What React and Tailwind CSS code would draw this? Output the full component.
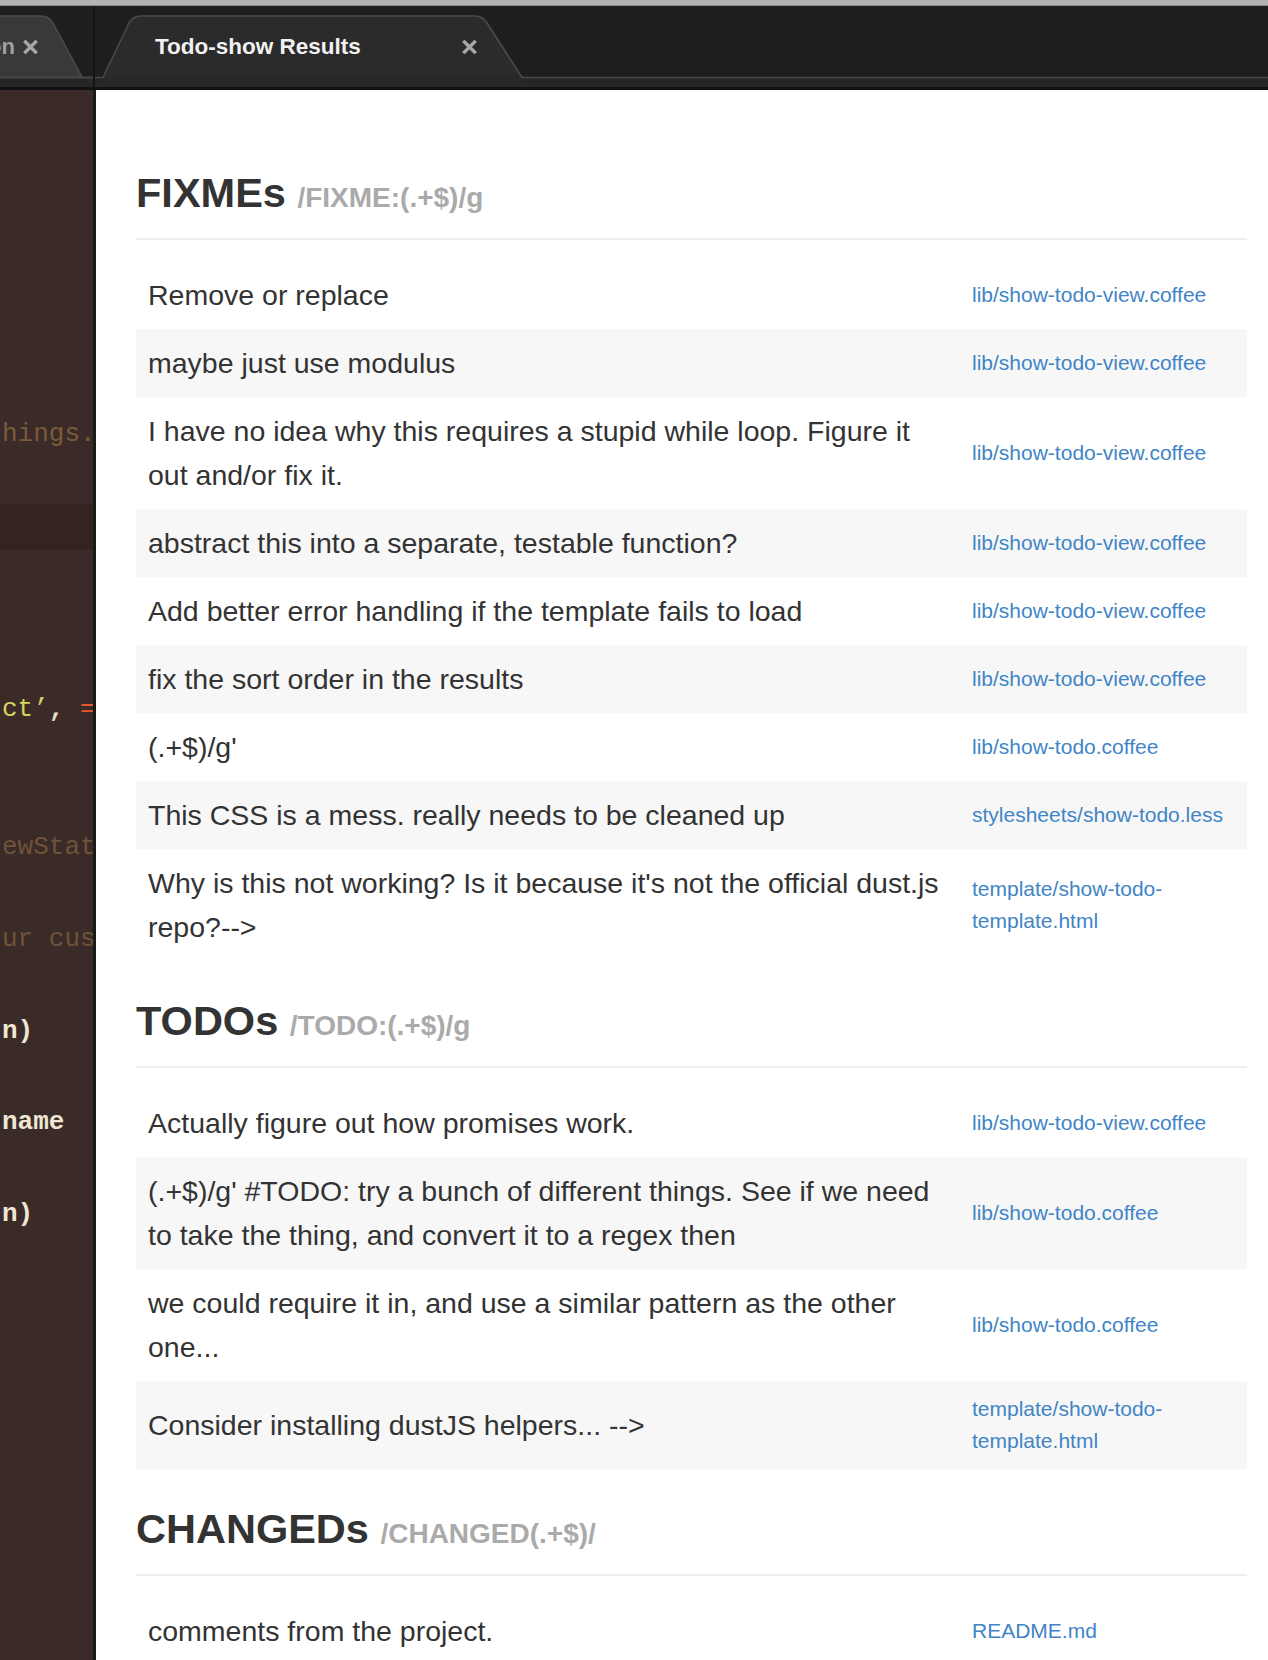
import React from "react";

const fixmes = [
    { text: "Remove or replace", file: "lib/show-todo-view.coffee" },
    { text: "maybe just use modulus", file: "lib/show-todo-view.coffee" },
    { text: "I have no idea why this requires a stupid while loop. Figure it out and/or fix it.", file: "lib/show-todo-view.coffee" },
    { text: "abstract this into a separate, testable function?", file: "lib/show-todo-view.coffee" },
    { text: "Add better error handling if the template fails to load", file: "lib/show-todo-view.coffee" },
    { text: "fix the sort order in the results", file: "lib/show-todo-view.coffee" },
    { text: "(.+$)/g'", file: "lib/show-todo.coffee" },
    { text: "This CSS is a mess. really needs to be cleaned up", file: "stylesheets/show-todo.less" },
    { text: "Why is this not working? Is it because it's not the official dust.js repo?-->", file: "template/show-todo-template.html" },
];

const todos = [
    { text: "Actually figure out how promises work.", file: "lib/show-todo-view.coffee" },
    { text: "(.+$)/g' #TODO: try a bunch of different things. See if we need to take the thing, and convert it to a regex then", file: "lib/show-todo.coffee" },
    { text: "we could require it in, and use a similar pattern as the other one...", file: "lib/show-todo.coffee" },
    { text: "Consider installing dustJS helpers... -->", file: "template/show-todo-template.html" },
];

const changeds = [
    { text: "comments from the project.", file: "README.md" },
];

// visible tail of each editor line (the pane is clipped on the left)
const codeLines = {
    0: [{ t: "hings.", c: "text-[#7a5a3b]" }],
    6: [
        { t: "ct\u2019", c: "text-[#d2d45e]" },
        { t: ", ", c: "text-[#e6dcc4] font-bold" },
        { t: "=", c: "text-[#e8562a]" },
    ],
    9: [{ t: "ewStat", c: "text-[#6e5339]" }],
    11: [{ t: "ur cus", c: "text-[#6e5339]" }],
    13: [{ t: "n)", c: "text-[#efe7d2] font-bold" }],
    15: [{ t: "name", c: "text-[#efe7d2] font-bold" }],
    17: [{ t: "n)", c: "text-[#efe7d2] font-bold" }],
};

const CloseX = () => (
    <svg width="15" height="14" viewBox="0 0 15 14" className="shrink-0">
        <path d="M2.5 2 L12.5 12 M12.5 2 L2.5 12" stroke="#a6a6a6" strokeWidth="3.4" strokeLinecap="square" />
    </svg>
);

const Section = ({ title, regex, items }) => (
    <section className="mt-[37px]">
        <h2 className="pb-[22px] border-b-2 border-[#eeeeee] text-[41.5px] leading-[46px] font-bold text-[#333333]">
            {title} <span className="text-[28px] leading-none font-bold text-[#aaaaaa]">{regex}</span>
        </h2>
        <table className="mt-[21px] w-full table-fixed border-collapse">
            <colgroup>
                <col className="w-[824px]" />
                <col />
            </colgroup>
            <tbody>
                {items.map((item, i) => (
                    <tr key={i} className={i % 2 === 1 ? "bg-[#f7f7f7]" : "bg-white"}>
                        <td className="px-[12px] py-[12px] align-middle text-[28.5px] leading-[44px] text-[#333333]">
                            {item.text}
                        </td>
                        <td className="px-[12px] py-[12px] align-middle text-[21px] leading-[32px] text-[#3f85c6]">
                            <a href="#">{item.file}</a>
                        </td>
                    </tr>
                ))}
            </tbody>
        </table>
    </section>
);

const App = () => {
    return (
        <div className="w-[1268px] h-[1660px] overflow-hidden flex flex-col bg-[#1e1e1e] font-['Liberation_Sans',Arial,sans-serif]">
            <div className="h-[6px] bg-[#b3b3b3] border-b border-[#8a8a8a]" />

            {/* tab bar */}
            <div className="h-[84px] flex">
                <div className="relative w-[95px] overflow-hidden">
                    <svg className="absolute inset-0" width="95" height="84">
                        <rect width="95" height="84" fill="#1e1e1e" />
                        <rect y="71" width="95" height="10" fill="#262626" />
                        <rect y="81" width="95" height="3" fill="#111111" />
                        <path d="M-2 71 L-2 10 L41 10 Q49 10 53 17 L82 71 Z" fill="#393939" />
                        <path d="M-2 10 L41 10 Q49 10 53 17 L82 71" fill="none" stroke="#4b4b4b" strokeWidth="1.5" />
                        <path d="M0 71.5 L95 71.5" stroke="#474747" strokeWidth="2" />
                        <path d="M94 0 L94 84" stroke="#141414" strokeWidth="2" />
                    </svg>
                    <div className="relative h-[71px] pt-[10px] flex items-center gap-[8px]">
                        <span className="ml-[-12px] text-[22px] font-bold text-[#a0a0a0]">on</span>
                        <CloseX />
                    </div>
                </div>
                <div className="relative flex-1">
                    <svg className="absolute inset-0" width="1173" height="84">
                        <rect width="1173" height="84" fill="#1e1e1e" />
                        <rect y="71" width="1173" height="10" fill="#262626" />
                        <rect y="81" width="1173" height="3" fill="#111111" />
                        <path d="M8 71 L34 17 Q38 10 46 10 L380 10 Q388 10 392 17 L427 71 Z" fill="#2b2b2b" />
                        <rect x="8" y="70" width="419" height="11" fill="#282828" />
                        <path d="M0 71.5 L8 71.5 L34 17 Q38 10 46 10 L380 10 Q388 10 392 17 L427 71.5 L1173 71.5" fill="none" stroke="#4a4a4a" strokeWidth="1.6" />
                    </svg>
                    <div className="relative h-[71px] pt-[10px] flex items-center">
                        <span className="ml-[60px] w-[307px] text-[22.5px] font-bold text-[#f2f2f2]">Todo-show Results</span>
                        <CloseX />
                    </div>
                </div>
            </div>

            <div className="flex-1 flex min-h-0">
                {/* editor pane, mostly hidden */}
                <div className="w-[96px] shrink-0 bg-[#3a2b28] border-r-[3px] border-[#1a1a1a] overflow-hidden pt-[322px] font-['Liberation_Mono',monospace] text-[26px] leading-[45.9px] whitespace-pre">
                    {Array.from({ length: 26 }, (_, k) => (
                        <div key={k} className={`h-[45.9px] ${k === 2 ? "bg-[#332420]" : ""}`}>
                            {codeLines[k] ? (
                                <span className="ml-[2px]">
                                    {codeLines[k].map((seg, j) => (
                                        <span key={j} className={seg.c}>{seg.t}</span>
                                    ))}
                                </span>
                            ) : null}
                        </div>
                    ))}
                </div>

                {/* results */}
                <div className="flex-1 bg-white pt-[43px] pl-[40px] pr-[21px] overflow-hidden">
                    <Section title="FIXMEs" regex="/FIXME:(.+$)/g" items={fixmes} />
                    <Section title="TODOs" regex="/TODO:(.+$)/g" items={todos} />
                    <Section title="CHANGEDs" regex="/CHANGED(.+$)/" items={changeds} />
                </div>
            </div>
        </div>
    );
};

export default App;
